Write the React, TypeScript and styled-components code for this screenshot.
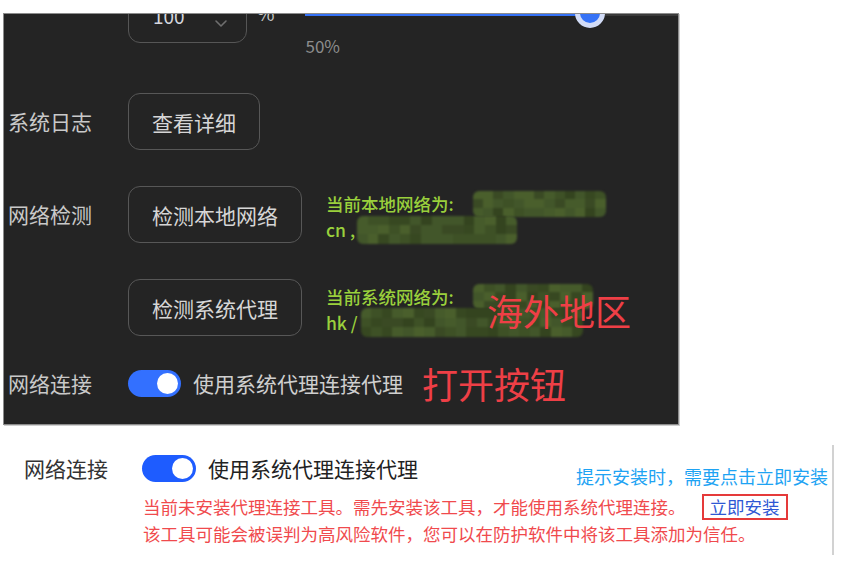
import React from "react";
import styled, { createGlobalStyle } from "styled-components";

const GlobalStyle = createGlobalStyle`
  *, *::before, *::after { box-sizing: border-box; }
  html, body { margin: 0; padding: 0; background: #fff; }
  body {
    width: 845px;
    height: 564px;
    overflow: hidden;
    font-family: "Noto Sans CJK SC", "Noto Sans", sans-serif;
  }
`;

const Page = styled.div`
  padding-top: 13px;
`;

const DarkPanel = styled.div`
  margin-left: 3px;
  width: 676px;
  height: 412px;
  background: #242424;
  border: 1px solid #8c8c8c;
  box-shadow: 1px 1px 0 #cfcfcf;
  overflow: hidden;
  padding-left: 4px;
  display: flex;
  flex-direction: column;
  gap: 36px;
`;

const Row = styled.div`
  position: relative;
  display: flex;
  align-items: center;
  min-height: 57px;
`;

const FirstRow = styled(Row)`
  align-items: flex-start;
  min-height: 70px;
  margin-top: -27px;
`;

const ToggleRow = styled(Row)`
  min-height: 27px;
  margin-top: -9px;
`;

const Label = styled.div`
  width: 120px;
  flex-shrink: 0;
  color: #c9c9c9;
  font-size: 21px;
  line-height: 27px;
`;

const Select = styled.div`
  width: 119px;
  height: 56px;
  border: 1.5px solid #565656;
  border-radius: 12px;
  display: flex;
  align-items: center;
  justify-content: space-between;
  padding: 0 18px 0 24px;
  color: #d3d6de;
  font-size: 19px;
  svg {
    margin-top: 16px;
  }
`;

const Percent = styled.span`
  margin-left: 10px;
  line-height: 52px;
  color: #c8c8c8;
  font-size: 19px;
`;

const SliderBox = styled.div`
  flex: 1;
  margin-left: 30px;
  display: flex;
  flex-direction: column;
`;

const SliderArea = styled.div`
  height: 51px;
  display: flex;
  align-items: center;
`;

const Track = styled.div`
  position: relative;
  width: 100%;
  height: 6px;
  background: #3a3a3a;
`;

const Fill = styled.div<{ $w: number }>`
  width: ${(p) => p.$w}px;
  height: 100%;
  background: #3572f6;
`;

const Thumb = styled.div<{ $left: number }>`
  position: absolute;
  left: ${(p) => p.$left}px;
  top: -12px;
  width: 30px;
  height: 30px;
  border-radius: 50%;
  background: #3572f6;
  border: 5px solid #d2dcf7;
`;

const SliderValue = styled.div`
  margin-left: 1px;
  color: #8d8d8d;
  font-size: 17px;
  line-height: 16px;
`;

const Button = styled.div`
  height: 57px;
  padding: 0 23px;
  border: 1.5px solid #575757;
  border-radius: 12px;
  display: flex;
  align-items: center;
  color: #d6d6d6;
  font-size: 21px;
  white-space: nowrap;
`;

const Info = styled.div`
  margin-left: 24px;
  padding-top: 4px;
  color: #9ad03c;
  font-size: 17.5px;
  line-height: 26px;
  font-weight: 500;
  white-space: nowrap;
`;

const InfoLine = styled.div`
  display: flex;
  align-items: center;
  height: 26px;
`;

const MosaicGrid = styled.span<{ $w: number; $h: number; $cols: number; $gap: number }>`
  display: inline-grid;
  grid-template-columns: repeat(${(p) => p.$cols}, 1fr);
  width: ${(p) => p.$w}px;
  height: ${(p) => p.$h}px;
  margin-left: ${(p) => p.$gap}px;
  border-radius: 6px;
  overflow: hidden;
  filter: blur(1.2px);
`;

const Annotation = styled.span<{ $gap?: number }>`
  margin-left: ${(p) => p.$gap ?? 0}px;
  color: #ee3f46;
  font-size: 36px;
  line-height: 40px;
  white-space: nowrap;
`;

const OverAnnotation = styled(Annotation)`
  position: absolute;
  left: 479px;
  top: 11px;
`;

const Switch = styled.div<{ $color: string; $w: number }>`
  width: ${(p) => p.$w}px;
  height: 27px;
  border-radius: 14px;
  background: ${(p) => p.$color};
  display: flex;
  align-items: center;
  justify-content: flex-end;
  padding-right: 3px;
  flex-shrink: 0;
  &::after {
    content: "";
    width: 21px;
    height: 21px;
    border-radius: 50%;
    background: #fff;
  }
`;

const SwitchText = styled.span<{ $color: string }>`
  margin-left: 12px;
  color: ${(p) => p.$color};
  font-size: 21px;
  line-height: 27px;
  white-space: nowrap;
`;

const BottomSection = styled.div`
  margin-top: 20px;
  width: 834px;
  height: 110px;
  border-right: 2px solid #d2d2d2;
  padding: 10px 0 0 24px;
  display: flex;
`;

const BottomLabel = styled.div`
  width: 118px;
  flex-shrink: 0;
  color: #333;
  font-size: 21px;
  line-height: 27px;
`;

const BottomContent = styled.div`
  flex: 1;
  display: flex;
  flex-direction: column;
`;

const TopLine = styled.div`
  display: flex;
  align-items: flex-start;
`;

const Hint = styled.span`
  margin-left: auto;
  margin-right: 4px;
  margin-top: 9px;
  color: #1ea3f3;
  font-size: 18px;
  line-height: 24px;
  white-space: nowrap;
`;

const Warning = styled.div`
  margin-top: 5px;
  margin-left: 1px;
  color: #f04a4d;
  font-size: 17.5px;
  white-space: nowrap;
`;

const WarningLine = styled.div`
  display: flex;
  align-items: center;
  height: 27px;
`;

const InstallLink = styled.span`
  margin-left: 16px;
  padding: 0 6px;
  border: 2px solid #e53a3a;
  color: #2e58d4;
  line-height: 22px;
`;

const palette = ["#3a4a24", "#42562a", "#34441f", "#4a5f2c", "#3e5126", "#374821", "#465b2b"];

const Mosaic = ({ w, h, seed, gap }: { w: number; h: number; seed: number; gap: number }) => {
  const cols = Math.ceil(w / 11);
  const rows = Math.ceil(h / 10);
  const cells: string[] = [];
  let s = seed;
  for (let i = 0; i < cols * rows; i++) {
    s = (s * 9301 + 49297) % 233280;
    cells.push(palette[Math.floor((s / 233280) * palette.length)]);
  }
  return (
    <MosaicGrid $w={w} $h={h} $cols={cols} $gap={gap}>
      {cells.map((c, i) => (
        <span key={i} style={{ background: c }} />
      ))}
    </MosaicGrid>
  );
};

const Chevron = () => (
  <svg width="14" height="9" viewBox="0 0 14 9" fill="none">
    <path d="M2 2l5 5 5-5" stroke="#6f6f6f" strokeWidth="1.6" strokeLinecap="round" strokeLinejoin="round" />
  </svg>
);

const App = () => {
  return (
    <Page>
      <GlobalStyle />
      <DarkPanel>
        <FirstRow>
          <Label />
          <Select>
            100
            <Chevron />
          </Select>
          <Percent>%</Percent>
          <SliderBox>
            <SliderArea>
              <Track>
                <Fill $w={285} />
                <Thumb $left={270} />
              </Track>
            </SliderArea>
            <SliderValue>50%</SliderValue>
          </SliderBox>
        </FirstRow>

        <Row>
          <Label>系统日志</Label>
          <Button>查看详细</Button>
        </Row>

        <Row>
          <Label>网络检测</Label>
          <Button>检测本地网络</Button>
          <Info>
            <InfoLine>
              当前本地网络为:
              <Mosaic w={133} h={26} seed={7} gap={19} />
            </InfoLine>
            <InfoLine>
              cn ,
              <Mosaic w={160} h={28} seed={19} gap={2} />
            </InfoLine>
          </Info>
        </Row>

        <Row>
          <Label />
          <Button>检测系统代理</Button>
          <Info>
            <InfoLine>
              当前系统网络为:
              <Mosaic w={120} h={25} seed={31} gap={19} />
            </InfoLine>
            <InfoLine>
              hk /
              <Mosaic w={222} h={29} seed={43} gap={3} />
            </InfoLine>
          </Info>
          <OverAnnotation>海外地区</OverAnnotation>
        </Row>

        <ToggleRow>
          <Label>网络连接</Label>
          <Switch $color="#3370ff" $w={53} />
          <SwitchText $color="#cfcfcf">使用系统代理连接代理</SwitchText>
          <Annotation $gap={19}>打开按钮</Annotation>
        </ToggleRow>
      </DarkPanel>

      <BottomSection>
        <BottomLabel>网络连接</BottomLabel>
        <BottomContent>
          <TopLine>
            <Switch $color="#1e5cff" $w={54} />
            <SwitchText $color="#222">使用系统代理连接代理</SwitchText>
            <Hint>提示安装时，需要点击立即安装</Hint>
          </TopLine>
          <Warning>
            <WarningLine>
              当前未安装代理连接工具。需先安装该工具，才能使用系统代理连接。
              <InstallLink>立即安装</InstallLink>
            </WarningLine>
            <WarningLine>该工具可能会被误判为高风险软件，您可以在防护软件中将该工具添加为信任。</WarningLine>
          </Warning>
        </BottomContent>
      </BottomSection>
    </Page>
  );
};

export default App;
